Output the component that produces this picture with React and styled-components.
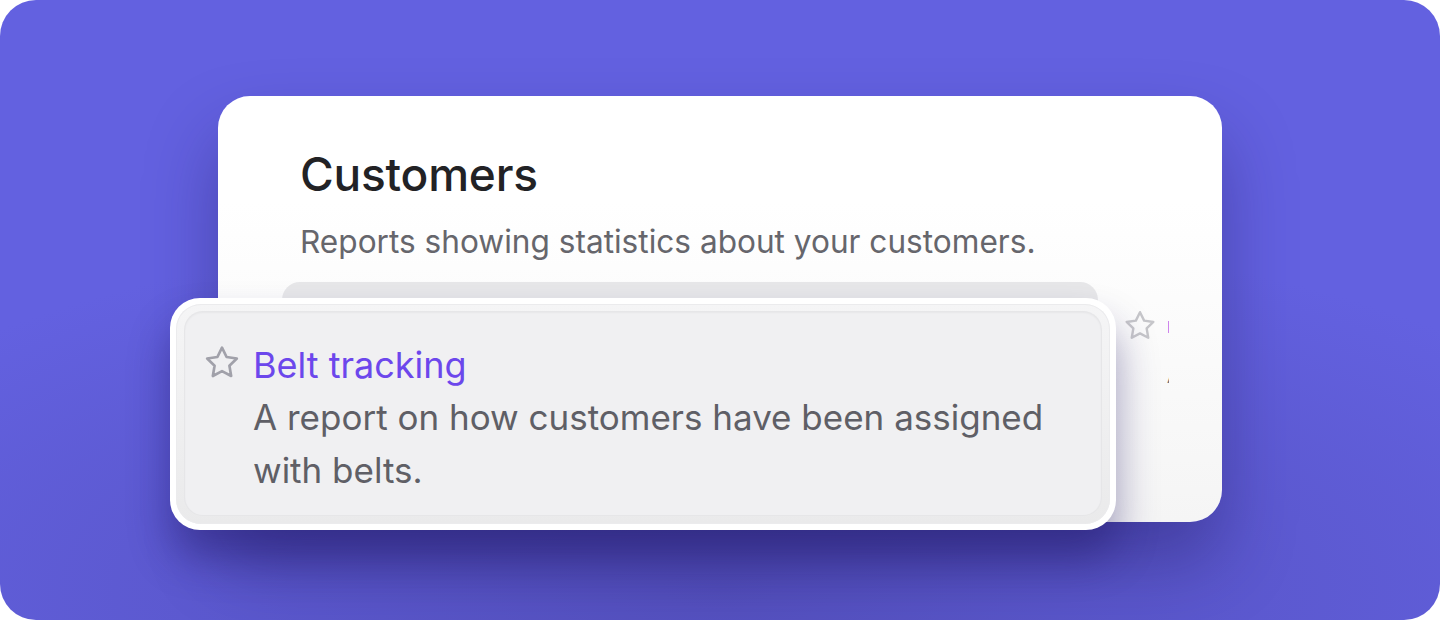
import React from "react";
import styled, { createGlobalStyle } from "styled-components";

const GlobalStyle = createGlobalStyle`
	html, body {
		margin: 0;
		padding: 0;
		background: #ffffff;
	}
	body {
		font-family: Inter, "Noto Sans", sans-serif;
		-webkit-font-smoothing: antialiased;
	}
`;

function StarIcon({ size = 40, color = "#a1a1aa" }) {
	return (
		<svg width={size} height={size} viewBox="0 0 24 24" fill="none">
			<path
				d="M12 2.8l2.75 5.6 6.15.9-4.45 4.35 1.05 6.15L12 16.9l-5.5 2.9 1.05-6.15L3.1 9.3l6.15-.9z"
				stroke={color}
				strokeWidth="1.6"
				strokeLinejoin="round"
			/>
		</svg>
	);
}

function App() {
	return (
		<>
			<GlobalStyle />
			<Frame>
				<Card>
					<Header>
						<Title>Customers</Title>
						<Subtitle>Reports showing statistics about your customers.</Subtitle>
					</Header>

					<ReportList>
						<ReportRow $active />
						<ReportRow>
							<StarIcon size={36} color="#c6c6ca" />
							<RowText>
								<RowTitle>Belt tracking</RowTitle>
								<RowDesc>A report on how customers</RowDesc>
							</RowText>
						</ReportRow>
					</ReportList>

					<Popup>
						<Bezel>
							<Panel>
								<StarSlot>
									<StarIcon />
								</StarSlot>
								<PanelText>
									<PanelTitle>Belt tracking</PanelTitle>
									<PanelDesc>A report on how customers have been assigned with belts.</PanelDesc>
								</PanelText>
							</Panel>
						</Bezel>
					</Popup>
				</Card>
			</Frame>
		</>
	);
}
export default App;

const Frame = styled.div`
	width: 1440px;
	height: 620px;
	box-sizing: border-box;
	border-radius: 36px;
	background: radial-gradient(ellipse 70% 60% at 50% 95%, #5450bd 0%, #6361e0 100%);
	padding: 96px 0 0 218px;
	overflow: hidden;
`;

const Card = styled.div`
	position: relative;
	width: 1004px;
	height: 426px;
	box-sizing: border-box;
	border-radius: 32px;
	background: linear-gradient(180deg, #ffffff 25%, #f5f5f5 100%);
	box-shadow: 0 40px 70px rgba(28, 20, 90, 0.38);
	padding: 50px 53px 0 64px;
`;

const Header = styled.div`
	padding-left: 18px;
`;

const Title = styled.h2`
	margin: 0;
	font-size: 46px;
	line-height: 56px;
	font-weight: 500;
	color: #222225;
	letter-spacing: -0.2px;
`;

const Subtitle = styled.p`
	margin: 21px 0 0;
	font-size: 31.6px;
	line-height: 38px;
	font-weight: 400;
	color: #66666c;
`;

const ReportList = styled.div`
	display: flex;
	gap: 12px;
	margin-top: 21px;
	overflow: hidden;
`;

const ReportRow = styled.div`
	flex: ${(p) => (p.$active ? "0 0 816px" : "0 0 400px")};
	height: 200px;
	box-sizing: border-box;
	border-radius: 18px;
	background: ${(p) => (p.$active ? "#e7e7e9" : "transparent")};
	display: flex;
	gap: 9px;
	padding: 26px 12px;
`;

const RowText = styled.div`
	display: flex;
	flex-direction: column;
	gap: 30px;
	padding-top: 9px;
`;

const RowTitle = styled.span`
	font-size: 16px;
	color: #6c47ec;
	white-space: nowrap;
`;

const RowDesc = styled.span`
	font-size: 16px;
	color: #6b6b72;
	white-space: nowrap;
`;

const Popup = styled.div`
	position: absolute;
	left: -48px;
	top: 202px;
	width: 946px;
	height: 232px;
	box-sizing: border-box;
	border-radius: 30px;
	background: #ffffff;
	padding: 6px;
	box-shadow: 0 28px 40px rgba(30, 22, 100, 0.42);
`;

const Bezel = styled.div`
	height: 100%;
	box-sizing: border-box;
	border-radius: 25px;
	background: linear-gradient(180deg, #f5f5f6 0%, #eaeaeb 100%);
	padding: 8px 9px 9px 9px;
	box-shadow: inset 0 0 0 1px #ebebed;
`;

const Panel = styled.div`
	height: 100%;
	box-sizing: border-box;
	border-radius: 18px;
	background: #f0f0f2;
	box-shadow: 0 0 0 1px #e6e6e8, inset 0 1px 2px rgba(0, 0, 0, 0.04);
	display: flex;
	gap: 11px;
	padding: 27px 20px 0 17px;
`;

const StarSlot = styled.div`
	padding-top: 4px;
	flex: none;
`;

const PanelText = styled.div`
	display: flex;
	flex-direction: column;
`;

const PanelTitle = styled.div`
	font-size: 36px;
	line-height: 52px;
	font-weight: 400;
	color: #6c47ec;
`;

const PanelDesc = styled.div`
	font-size: 35px;
	line-height: 53px;
	color: #5f5f66;
	max-width: 820px;
`;
